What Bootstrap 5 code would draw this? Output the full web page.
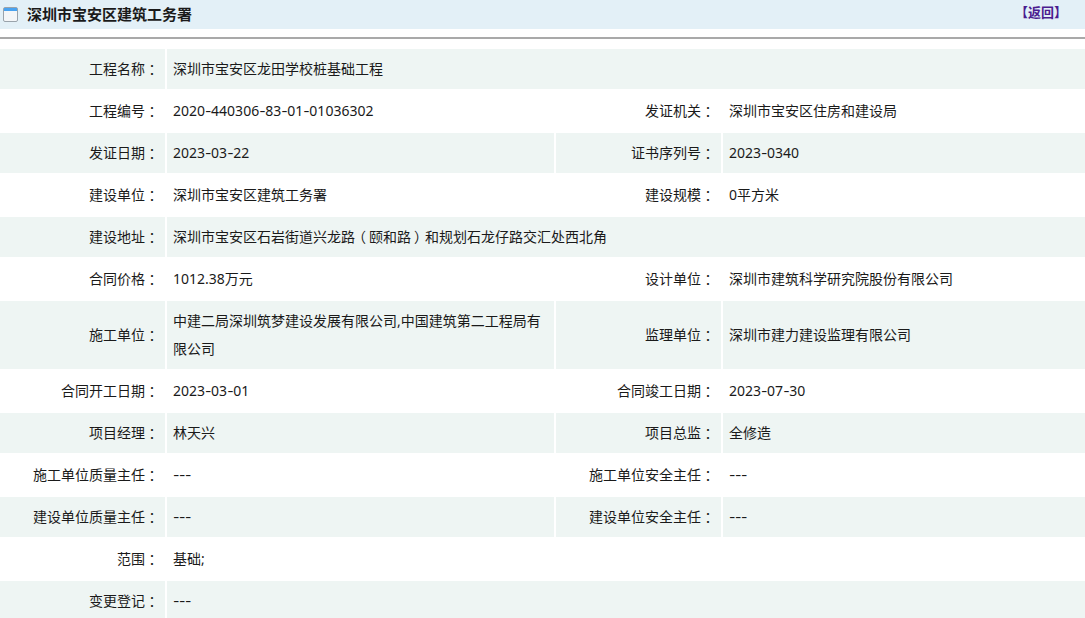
<!DOCTYPE html>
<html lang="zh-CN">
<head>
<meta charset="utf-8">
<title>深圳市宝安区建筑工务署</title>
<link href="https://cdn.jsdelivr.net/npm/bootstrap@5.3.0/dist/css/bootstrap.min.css" rel="stylesheet">
<style>
html,body{height:618px;overflow:hidden;background:#fff;}
body{font-family:"Noto Sans","Noto Sans CJK SC",sans-serif;font-size:14px;color:#1a1a1a;}
.head-bar{height:29px;background:#e3f0f7;padding:0 18px 0 3px;}
.head-title{font-size:15px;font-weight:700;color:#1a1a1a;line-height:29px;margin-left:6px;}
.head-back{color:#4b1c8f;font-size:13px;font-weight:700;text-decoration:none;line-height:25px;align-self:flex-start;}
.head-rule{height:2px;background:#a9a9a9;margin-top:8px;margin-bottom:10px;opacity:1;border:0;}
.info-table{border-collapse:separate;border-spacing:0;width:1085px;table-layout:fixed;}
.info-table td{height:42px;padding:0 6px;border-right:2px solid #fff;border-bottom:2px solid #fff;line-height:28px;vertical-align:middle;}
.info-table td:last-child{border-right:0;}
.info-table tr:nth-child(odd) td{background:#eef5f3;}
.info-table td.lab{text-align:right;}
.info-table tr.tall td{height:70px;}
.mid-punct{display:inline-block;width:1em;text-align:center;font-feature-settings:"palt";line-height:1;}
.wide-dash{font-family:Inter,sans-serif;line-height:1;letter-spacing:-.4px;}
</style>
</head>
<body>
<div class="head-bar d-flex align-items-center">
<svg width="18" height="17" viewBox="0 0 18 17" class="flex-shrink-0"><rect x="0.5" y="1.5" width="14" height="14" rx="1.5" fill="#f4f6f8" stroke="#9aa3ab"/><rect x="1" y="2" width="13" height="3" fill="#4aa3f0"/></svg>
<span class="head-title flex-grow-1">深圳市宝安区建筑工务署</span>
<a href="#" class="head-back">【返回】</a>
</div>
<hr class="head-rule">
<table class="info-table">
<colgroup><col style="width:167px"><col style="width:389px"><col style="width:167px"><col></colgroup>
<tbody>
<tr><td class="lab">工程名称<span class="mid-punct">：</span></td><td colspan="3">深圳市宝安区龙田学校桩基础工程</td></tr>
<tr><td class="lab">工程编号<span class="mid-punct">：</span></td><td>2020<span class="wide-dash">-</span>440306<span class="wide-dash">-</span>83<span class="wide-dash">-</span>01<span class="wide-dash">-</span>01036302</td><td class="lab">发证机关<span class="mid-punct">：</span></td><td>深圳市宝安区住房和建设局</td></tr>
<tr><td class="lab">发证日期<span class="mid-punct">：</span></td><td>2023<span class="wide-dash">-</span>03<span class="wide-dash">-</span>22</td><td class="lab">证书序列号<span class="mid-punct">：</span></td><td>2023<span class="wide-dash">-</span>0340</td></tr>
<tr><td class="lab">建设单位<span class="mid-punct">：</span></td><td>深圳市宝安区建筑工务署</td><td class="lab">建设规模<span class="mid-punct">：</span></td><td>0平方米</td></tr>
<tr><td class="lab">建设地址<span class="mid-punct">：</span></td><td colspan="3">深圳市宝安区石岩街道兴龙路<span class="mid-punct">（</span>颐和路<span class="mid-punct">）</span>和规划石龙仔路交汇处西北角</td></tr>
<tr><td class="lab">合同价格<span class="mid-punct">：</span></td><td>1012.38万元</td><td class="lab">设计单位<span class="mid-punct">：</span></td><td>深圳市建筑科学研究院股份有限公司</td></tr>
<tr class="tall"><td class="lab">施工单位<span class="mid-punct">：</span></td><td>中建二局深圳筑梦建设发展有限公司,中国建筑第二工程局有限公司</td><td class="lab">监理单位<span class="mid-punct">：</span></td><td>深圳市建力建设监理有限公司</td></tr>
<tr><td class="lab">合同开工日期<span class="mid-punct">：</span></td><td>2023<span class="wide-dash">-</span>03<span class="wide-dash">-</span>01</td><td class="lab">合同竣工日期<span class="mid-punct">：</span></td><td>2023<span class="wide-dash">-</span>07<span class="wide-dash">-</span>30</td></tr>
<tr><td class="lab">项目经理<span class="mid-punct">：</span></td><td>林天兴</td><td class="lab">项目总监<span class="mid-punct">：</span></td><td>全修造</td></tr>
<tr><td class="lab">施工单位质量主任<span class="mid-punct">：</span></td><td><span class="wide-dash">---</span></td><td class="lab">施工单位安全主任<span class="mid-punct">：</span></td><td><span class="wide-dash">---</span></td></tr>
<tr><td class="lab">建设单位质量主任<span class="mid-punct">：</span></td><td><span class="wide-dash">---</span></td><td class="lab">建设单位安全主任<span class="mid-punct">：</span></td><td><span class="wide-dash">---</span></td></tr>
<tr><td class="lab">范围<span class="mid-punct">：</span></td><td colspan="3">基础;</td></tr>
<tr><td class="lab">变更登记<span class="mid-punct">：</span></td><td colspan="3"><span class="wide-dash">---</span></td></tr>
</tbody>
</table>
<script src="https://cdn.jsdelivr.net/npm/bootstrap@5.3.0/dist/js/bootstrap.bundle.min.js"></script>
</body>
</html>
